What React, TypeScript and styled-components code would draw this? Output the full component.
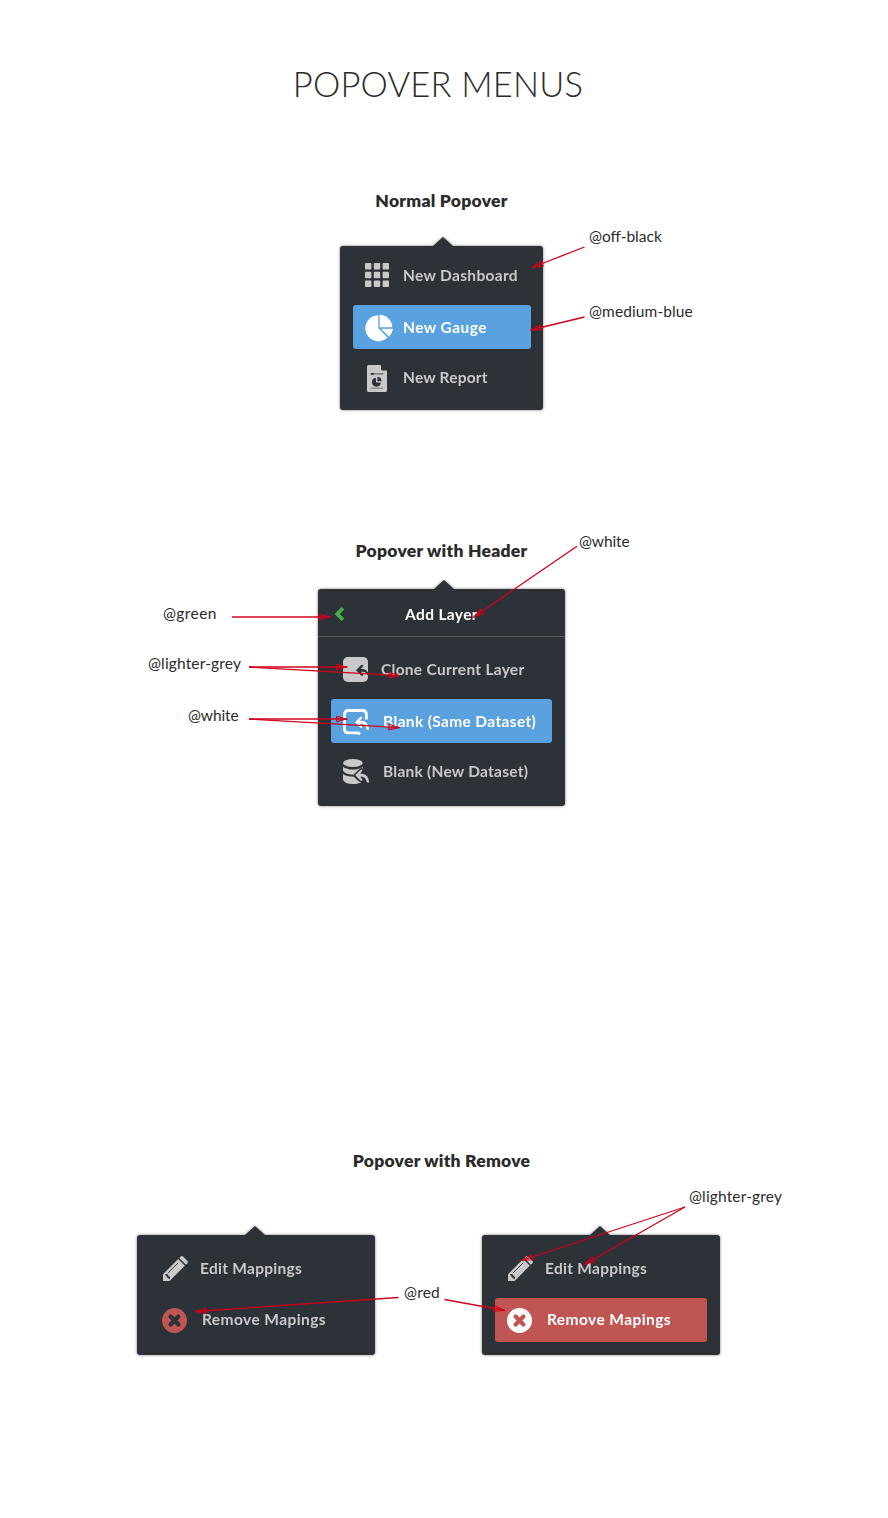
import React from "react";
import styled, { createGlobalStyle } from "styled-components";

const color = {
  offBlack: "#2d3138",
  mediumBlue: "#5aa1e0",
  lighterGrey: "#c9c9c9",
  white: "#ffffff",
  green: "#43b049",
  red: "#bf5653",
  ink: "#2b2b2b",
  arrow: "#d0021b",
};

const GlobalStyle = createGlobalStyle`
  body {
    margin: 0;
    background: #fff;
    font-family: Lato, "Liberation Sans", sans-serif;
    color: ${color.ink};
  }
  * { box-sizing: border-box; }
`;

const Page = styled.main`
  position: relative;
  display: flex;
  flex-direction: column;
  align-items: center;
  width: 888px;
  height: 1518px;
  padding: 64px 5px 0 0;
  overflow: hidden;
`;

const PageTitle = styled.h1`
  margin: 0 7px 0 0;
  font-size: 34.5px;
  font-weight: 300;
  line-height: 40px;
  letter-spacing: 0.2px;
  white-space: nowrap;
`;

const Section = styled.section<{ $top: number; $gap: number }>`
  display: flex;
  flex-direction: column;
  align-items: center;
  gap: ${(p) => p.$gap}px;
  margin-top: ${(p) => p.$top}px;
`;

const SectionTitle = styled.h2`
  margin: 0;
  font-size: 17.5px;
  font-weight: 800;
  line-height: 24px;
  letter-spacing: 0.25px;
  white-space: nowrap;
`;

const PopoverPair = styled.div`
  display: flex;
  gap: 107px;
  margin-right: 26px;
`;

const Popover = styled.div<{ $width: number; $caret: number }>`
  position: relative;
  width: ${(p) => p.$width}px;
  border-radius: 3px;
  background: ${color.offBlack};
  filter: drop-shadow(0 0 1.5px rgba(0, 0, 0, 0.5));

  &::before {
    content: "";
    position: absolute;
    top: -9px;
    left: ${(p) => p.$caret - 10}px;
    border: solid transparent;
    border-width: 0 10px 9.5px;
    border-bottom-color: ${color.offBlack};
  }
`;

const PopoverHeader = styled.header`
  display: flex;
  align-items: center;
  height: 48px;
  padding: 3px 16px 0;
  border-bottom: 1px solid #5b5f63;
`;

const HeaderTitle = styled.h3`
  flex: 1;
  margin: 0 26px 0 0;
  padding: 0 0 1px 16px;
  color: ${color.white};
  font-size: 15.5px;
  font-weight: 700;
  line-height: 20px;
  letter-spacing: 0.35px;
  text-align: center;
`;

const Menu = styled.ul<{ $top: number; $bottom: number }>`
  display: flex;
  flex-direction: column;
  gap: 7px;
  margin: 0;
  padding: ${(p) => p.$top}px 13px ${(p) => p.$bottom}px;
  list-style: none;
`;

const MenuItem = styled.li<{ $active?: string; $wide?: boolean }>`
  display: flex;
  align-items: center;
  height: 44px;
  margin-right: ${(p) => (p.$wide ? -1 : 0)}px;
  padding: 0 0 ${(p) => (p.$active ? 0 : 2)}px 12px;
  border-radius: 3px;
  background: ${(p) => p.$active ?? "transparent"};
  color: ${(p) => (p.$active ? color.white : color.lighterGrey)};
`;

const ItemIcon = styled.span<{ $size: number; $shift?: number; $drop?: number }>`
  display: flex;
  flex: none;
  width: ${(p) => p.$size}px;
  margin-top: ${(p) => (p.$drop ?? 0) * 2}px;
  padding-left: ${(p) => p.$shift ?? 0}px;

  svg {
    display: block;
    flex: none;
    overflow: visible;
  }
`;

const ItemLabel = styled.span<{ $gap: number; $track: number; $lift?: number }>`
  margin-left: ${(p) => p.$gap}px;
  padding-bottom: ${(p) => (p.$lift ?? 0) * 2}px;
  font-size: 15.5px;
  font-weight: 700;
  line-height: 20px;
  letter-spacing: ${(p) => p.$track}px;
  white-space: nowrap;
`;

const Annotations = styled.div`
  position: absolute;
  inset: 0;
  pointer-events: none;

  svg {
    display: block;
  }
`;

const Note = styled.span<{ $x: number; $y: number; $track?: number }>`
  position: absolute;
  left: ${(p) => p.$x}px;
  top: ${(p) => p.$y - 11}px;
  font-size: 15.5px;
  line-height: 20px;
  letter-spacing: ${(p) => p.$track ?? 0}px;
  white-space: nowrap;
`;

const GridIcon = () => (
  <svg width="24" height="24" viewBox="0 0 24 24" fill="currentColor">
    {[0, 8.8, 17.6].map((y) =>
      [0, 8.8, 17.6].map((x) => <rect key={`${x}-${y}`} x={x} y={y} width="6.4" height="6.4" rx="0.9" />)
    )}
  </svg>
);

const GaugeIcon = () => (
  <svg width="28" height="26" viewBox="0 0 28 26" fill="currentColor">
    <path d="M13.3.2A13 13 0 1 0 22.5 22.4L13.3 13.2Z" />
    <path d="M14.6-.3A12.8 12.8 0 0 1 27.3 12.2H14.6Z" />
    <path d="M16 13.8H28A13 13 0 0 1 24 21.8Z" />
  </svg>
);

const ReportIcon = () => (
  <svg width="20" height="27" viewBox="0 0 20 27">
    <path
      fill="currentColor"
      d="M1.5 0H13.2L14 .5V4Q14 5.6 15.6 5.6H19.6L20 6.2V25.5Q20 27 18.5 27H1.5Q0 27 0 25.5V1.5Q0 0 1.5 0Z"
    />
    <path stroke={color.offBlack} strokeWidth="1" d="M4 8.9H16.3" opacity=".8" />
    <path fill={color.offBlack} d="M3.7 8h3v1.8h-3z" />
    <path fill={color.offBlack} d="M8.8 12.7A4.5 4.5 0 1 0 13.9 17.8L9.2 17.4Z" />
    <path fill={color.offBlack} d="M10.4 12A4.2 4.2 0 0 1 14.5 16.2H10.4Z" />
    <path stroke={color.offBlack} strokeWidth="1" d="M3.5 23.2H16" opacity=".55" />
  </svg>
);

const replyShape =
  "M12 13.3 17.2 8.1Q18.6 7.1 19.4 8.7L16.9 11.8H19Q25.2 12.6 26 20.4Q24.8 21.4 23.5 20.2Q22.6 15.3 19 14.8H16.900L19.400 17.900Q18.600 19.500 17.200 18.500Z";

const CloneIcon = () => (
  <svg width="25" height="25" viewBox="0 0 25 25">
    <rect width="25" height="25" rx="4.8" fill="currentColor" />
    <path
      fill={color.offBlack}
      d="M13 13.300 18.200 8.100Q19.700 7.100 20.500 8.800L17.800 11.900H20.500Q23.500 12.500 25 15.600V18.600Q22.900 15 20 14.800H17.800L20.500 17.800Q19.700 19.500 18.200 18.500Z"
    />
  </svg>
);

const SameDatasetIcon = () => (
  <svg width="26" height="26" viewBox="0 0 26 26">
    <path
      fill="none"
      stroke="currentColor"
      strokeWidth="2.800"
      d="M23.400 10.600V5.400Q23.400 1.500 19.600 1.500H5.300Q1.500 1.500 1.500 5.400V20Q1.500 23.900 5.300 23.900H15.200L17.200 25.200"
    />
    <path fill="currentColor" d={replyShape} />
  </svg>
);

const NewDatasetIcon = () => (
  <svg width="26" height="25" viewBox="0 0 26 25">
    <g fill="currentColor">
      <ellipse cx="9.900" cy="4" rx="9.900" ry="4" />
      <path d="M0 7.800Q3.500 10.600 9.900 10.600Q16.300 10.600 19.800 7.800V11L12 15.700Q2 15.700 0 11.700Z" />
      <path d="M0 15Q3.500 17.800 11 17.800L15.500 22.200H19.800Q16.500 25 9.900 25Q1.600 25 0 20.800Z" />
    </g>
    <g transform="translate(0.200 2.900)" strokeLinejoin="round">
      <path fill={color.offBlack} stroke={color.offBlack} strokeWidth="3" d={replyShape} />
      <path fill="currentColor" d={replyShape} />
    </g>
  </svg>
);

const PencilIcon = () => (
  <svg width="25" height="25" viewBox="0 0 25 25">
    <path fill="currentColor" d="M0 25V18.300L15.200 3.100L21.800 9.700L6.600 25Z" />
    <path
      fill="currentColor"
      d="M16.300 2L17.800.6Q19 -.4 20.200.7L24.300 4.800Q25.400 6 24.400 7.200L22.900 8.700Z"
    />
    <path stroke={color.offBlack} strokeWidth="0.900" d="M4.800 17.200 15.200 6.800" />
    <path
      fill="none"
      stroke={color.offBlack}
      strokeWidth="1.700"
      d="M2.400 19.200Q3.500 18.300 4.400 19.600Q3.900 21 5.500 20.800Q6.800 21.600 5.700 22.800"
    />
  </svg>
);

const RemoveIcon = ({ disc, cross }: { disc: string; cross: string }) => (
  <svg width="25" height="25" viewBox="0 0 25 25">
    <circle cx="12.500" cy="12.500" r="12.500" fill={disc} />
    <path stroke={cross} strokeWidth="4.200" strokeLinecap="round" d="M8.600 8.600 16.400 16.400M16.400 8.600 8.600 16.400" />
  </svg>
);

const BackIcon = () => (
  <svg width="10" height="14" viewBox="0 0 10 14">
    <path fill="none" stroke={color.green} strokeWidth="3.700" d="M9 1.200 3.200 7 9 12.800" />
  </svg>
);

type Point = [number, number];

const Arrow = ({ from, to }: { from: Point; to: Point }) => {
  const dx = to[0] - from[0];
  const dy = to[1] - from[1];
  const length = Math.hypot(dx, dy);
  const angle = (Math.atan2(dy, dx) * 180) / Math.PI;
  return (
    <g transform={`translate(${from[0]} ${from[1]}) rotate(${angle})`}>
      <path d={`M0 0H${length}`} />
      <path d={`M${length - 1} 0L${length - 11} -2.800V2.800Z`} fill={color.arrow} fillOpacity="0.250" strokeWidth="1" />
    </g>
  );
};

const arrows: { from: Point; to: Point }[] = [
  { from: [584.5, 247], to: [532, 267.5] },
  { from: [584.5, 317], to: [530.5, 330] },
  { from: [577, 546.3], to: [473, 617.5] },
  { from: [232, 617], to: [330.5, 617] },
  { from: [249, 667], to: [347.5, 667] },
  { from: [249, 667], to: [400, 675.7] },
  { from: [249, 719], to: [347.5, 719] },
  { from: [249, 719], to: [400, 727.7] },
  { from: [685, 1207], to: [521.5, 1260.5] },
  { from: [685, 1207], to: [584, 1264.7] },
  { from: [398.5, 1297.5], to: [195, 1311.5] },
  { from: [444.5, 1299.5], to: [505, 1310.5] },
];

export default function App() {
  return (
    <>
      <GlobalStyle />
      <Page>
        <PageTitle>POPOVER MENUS</PageTitle>

        <Section $top={85} $gap={33}>
          <SectionTitle>Normal Popover</SectionTitle>
          <Popover $width={203} $caret={103}>
            <Menu $top={8} $bottom={10}>
              <MenuItem $wide>
                <ItemIcon $size={28}><GridIcon /></ItemIcon>
                <ItemLabel $gap={10} $track={0.33}>New Dashboard</ItemLabel>
              </MenuItem>
              <MenuItem $wide $active={color.mediumBlue}>
                <ItemIcon $size={28} $drop={1}><GaugeIcon /></ItemIcon>
                <ItemLabel $gap={10} $track={0.45}>New Gauge</ItemLabel>
              </MenuItem>
              <MenuItem $wide>
                <ItemIcon $size={28} $shift={2} $drop={1.5}><ReportIcon /></ItemIcon>
                <ItemLabel $gap={10} $track={0.2}>New Report</ItemLabel>
              </MenuItem>
            </Menu>
          </Popover>
        </Section>

        <Section $top={129} $gap={26}>
          <SectionTitle>Popover with Header</SectionTitle>
          <Popover $width={247} $caret={126}>
            <PopoverHeader>
              <BackIcon />
              <HeaderTitle>Add Layer</HeaderTitle>
            </PopoverHeader>
            <Menu $top={11} $bottom={12}>
              <MenuItem>
                <ItemIcon $size={26}><CloneIcon /></ItemIcon>
                <ItemLabel $gap={12} $track={0.28}>Clone Current Layer</ItemLabel>
              </MenuItem>
              <MenuItem $active={color.mediumBlue}>
                <ItemIcon $size={26} $drop={1}><SameDatasetIcon /></ItemIcon>
                <ItemLabel $gap={14} $track={0.35}>Blank (Same Dataset)</ItemLabel>
              </MenuItem>
              <MenuItem>
                <ItemIcon $size={26} $drop={0.5}><NewDatasetIcon /></ItemIcon>
                <ItemLabel $gap={14} $track={0.24}>Blank (New Dataset)</ItemLabel>
              </MenuItem>
            </Menu>
          </Popover>
        </Section>

        <Section $top={343} $gap={62}>
          <SectionTitle>Popover with Remove</SectionTitle>
          <PopoverPair>
            <Popover $width={238} $caret={118}>
              <Menu $top={12} $bottom={13}>
                <MenuItem>
                  <ItemIcon $size={26} $shift={1}><PencilIcon /></ItemIcon>
                  <ItemLabel $gap={12} $track={0.28}>Edit Mappings</ItemLabel>
                </MenuItem>
                <MenuItem>
                  <ItemIcon $size={26} $drop={1}><RemoveIcon disc={color.red} cross={color.offBlack} /></ItemIcon>
                  <ItemLabel $gap={14} $track={0.42}>Remove Mapings</ItemLabel>
                </MenuItem>
              </Menu>
            </Popover>
            <Popover $width={238} $caret={118}>
              <Menu $top={12} $bottom={13}>
                <MenuItem>
                  <ItemIcon $size={26} $shift={1}><PencilIcon /></ItemIcon>
                  <ItemLabel $gap={12} $track={0.28}>Edit Mappings</ItemLabel>
                </MenuItem>
                <MenuItem $active={color.red}>
                  <ItemIcon $size={26}><RemoveIcon disc={color.white} cross={color.red} /></ItemIcon>
                  <ItemLabel $gap={14} $track={0.42} $lift={1}>Remove Mapings</ItemLabel>
                </MenuItem>
              </Menu>
            </Popover>
          </PopoverPair>
        </Section>

        <Annotations>
          <svg width="888" height="1518" viewBox="0 0 888 1518" fill="none" stroke={color.arrow} strokeWidth="1.300">
            {arrows.map((a, i) => (
              <Arrow key={i} from={a.from} to={a.to} />
            ))}
          </svg>
          <Note $x={589} $y={237}>@off-black</Note>
          <Note $x={589} $y={312} $track={0.1}>@medium-blue</Note>
          <Note $x={579} $y={542} $track={-0.1}>@white</Note>
          <Note $x={163} $y={614} $track={0.4}>@green</Note>
          <Note $x={148} $y={664} $track={0.15}>@lighter-grey</Note>
          <Note $x={188} $y={716} $track={-0.1}>@white</Note>
          <Note $x={689} $y={1197} $track={0.15}>@lighter-grey</Note>
          <Note $x={404} $y={1293} $track={0.2}>@red</Note>
        </Annotations>
      </Page>
    </>
  );
}
